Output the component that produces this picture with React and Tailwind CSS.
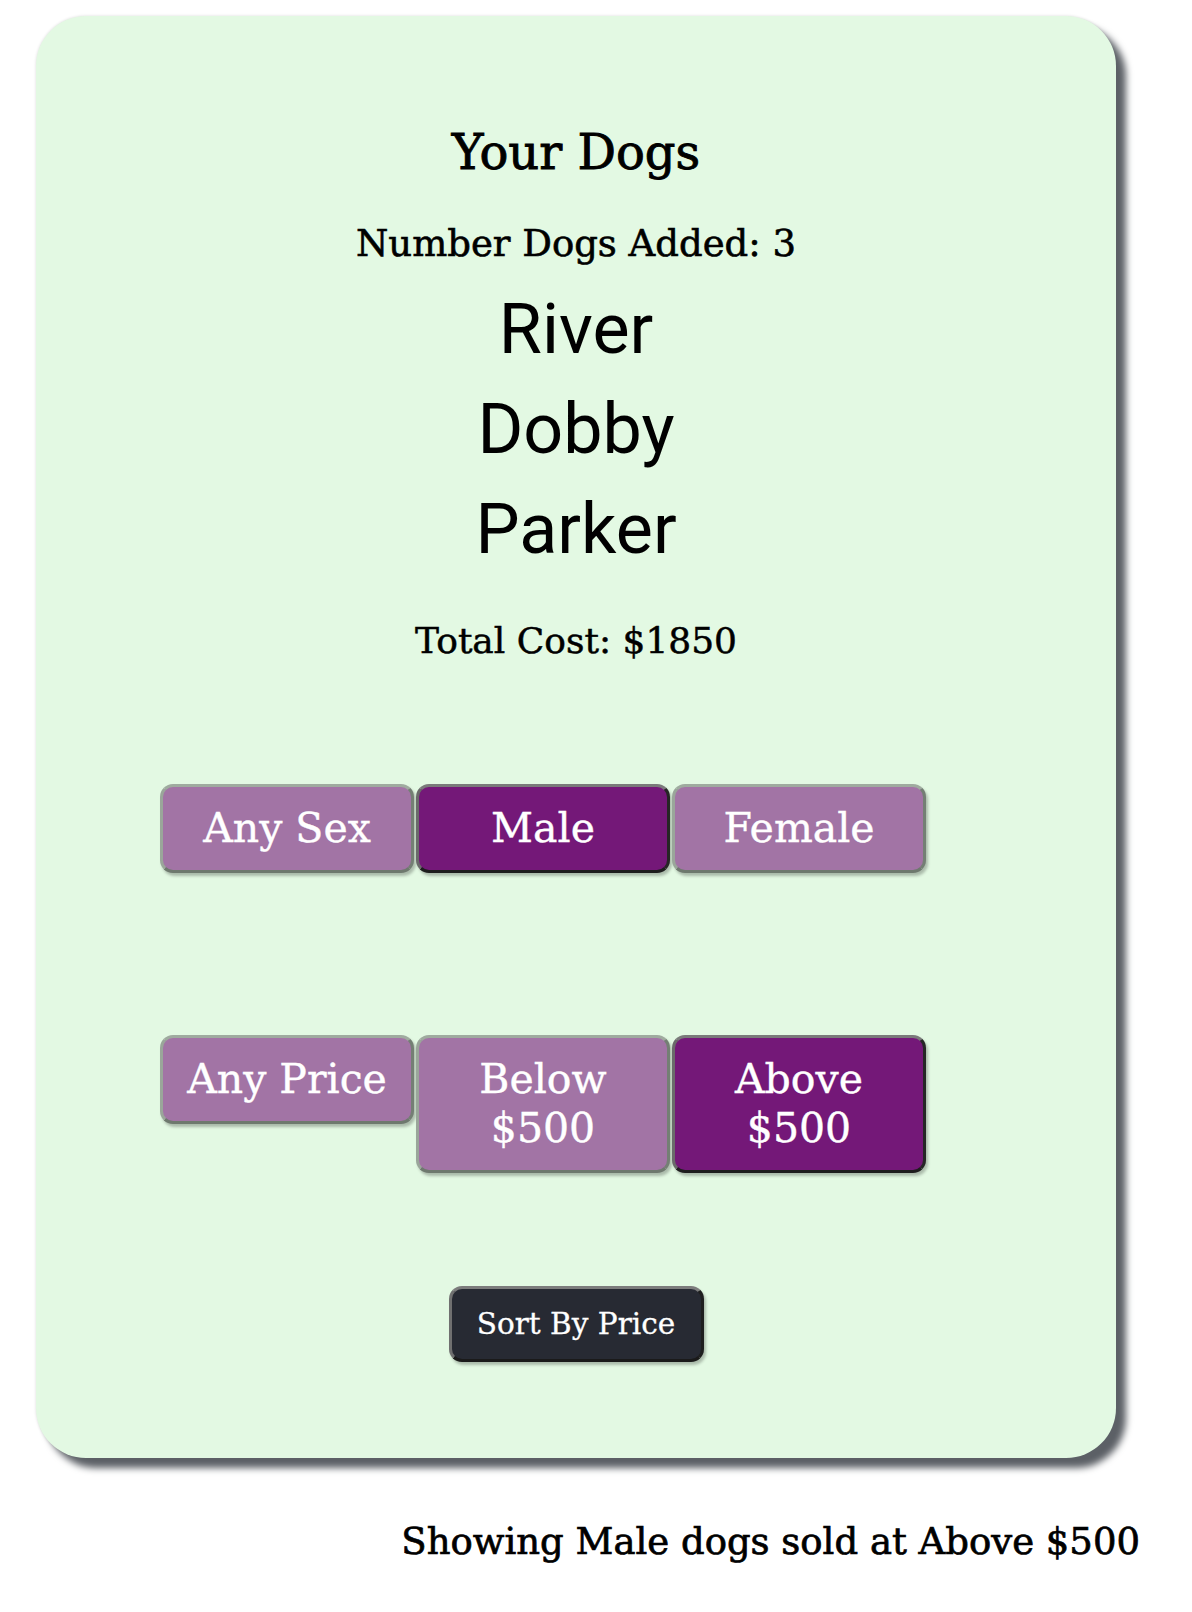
const SEX = [
  { id: 'any', label: 'Any Sex' },
  { id: 'male', label: 'Male' },
  { id: 'female', label: 'Female' },
]

const PRICE = [
  { id: 'any', label: 'Any Price' },
  { id: 'below', label: 'Below $500' },
  { id: 'above', label: 'Above $500' },
]

const DOGS = ['River', 'Dobby', 'Parker']

function FilterButton({ label, active }) {
  return (
    <button
      className={`w-[254px] px-[20px] py-[17px] rounded-[13px] border-[3px] text-[41px] leading-[49px] text-white text-center [-webkit-text-stroke:0.4px_white] shadow-[2px_3px_3px_rgba(0,0,0,0.25)] ${
        active
          ? 'bg-[#741878] border-t-[#7a7a7a] border-l-[#6a6a6a] border-b-[#1e1e1e] border-r-[#262626]'
          : 'bg-[#a274a5] border-t-[#9fab9f] border-l-[#9aa69a] border-b-[#6e796e] border-r-[#747f74]'
      }`}
    >
      {label}
    </button>
  )
}

export default function App() {
  const sex = 'male'
  const price = 'above'

  return (
    <div className="min-h-[1612px] bg-white pt-[16px] pl-[36px] font-['DejaVu_Serif',serif] text-black">
      {/* Card */}
      <div className="w-[1080px] bg-[#e3f9e3] rounded-[50px] shadow-[10px_10px_7px_#5c6066,0_0_3px_rgba(0,0,0,0.15)] pt-[108px] pb-[96px] flex flex-col">
        <h1 className="text-center text-[48px] leading-[56px] [-webkit-text-stroke:0.9px_black]">Your Dogs</h1>
        <p className="mt-[42px] text-center text-[37px] leading-[44px] [-webkit-text-stroke:0.6px_black]">Number Dogs Added: 3</p>

        <div className="mt-[13px] flex flex-col items-center font-['Roboto',sans-serif] text-[70px] leading-[100px]">
          {DOGS.map(d => (
            <div key={d}>{d}</div>
          ))}
        </div>

        <p className="mt-[40px] text-center text-[36px] leading-[44px] [-webkit-text-stroke:0.5px_black]">Total Cost: $1850</p>

        {/* Sex filter */}
        <div className="mt-[121px] ml-[124px] flex items-start gap-[2px]">
          {SEX.map(s => (
            <FilterButton key={s.id} label={s.label} active={s.id === sex} />
          ))}
        </div>

        {/* Price filter */}
        <div className="mt-[162px] ml-[124px] flex items-start gap-[2px]">
          {PRICE.map(p => (
            <FilterButton key={p.id} label={p.label} active={p.id === price} />
          ))}
        </div>

        <button className="mt-[113px] mx-auto w-[255px] py-[17px] rounded-[13px] border-[3px] border-t-[#7c7c7c] border-l-[#707070] border-b-[#1a1a1a] border-r-[#1f1f1f] bg-[#272a33] text-white text-[29.5px] leading-[36px] [-webkit-text-stroke:0.3px_white] shadow-[2px_3px_3px_rgba(0,0,0,0.25)]">
          Sort By Price
        </button>
      </div>

      <p className="mt-[62px] pr-[52px] text-right text-[37px] leading-[44px] [-webkit-text-stroke:0.7px_black]">
        Showing Male dogs sold at Above $500
      </p>
    </div>
  )
}
